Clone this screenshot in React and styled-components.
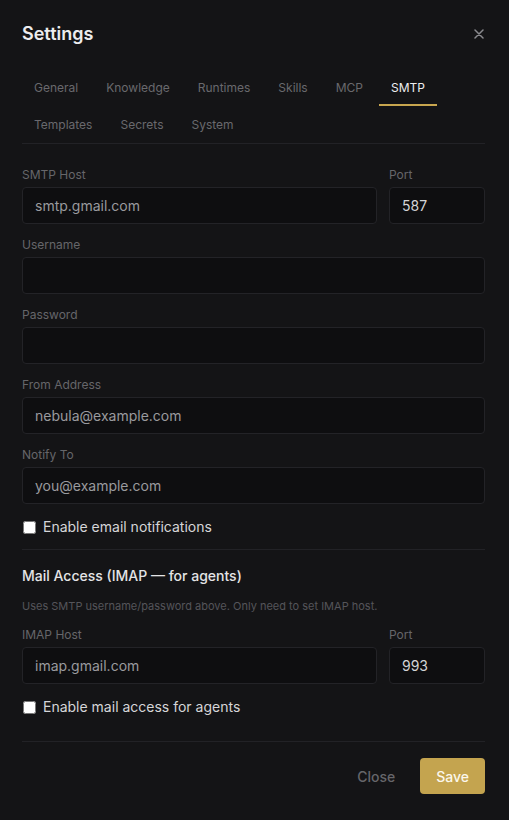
import React from "react";
import styled, { createGlobalStyle } from "styled-components";

const GlobalStyle = createGlobalStyle`
  html, body {
    margin: 0;
    padding: 0;
    background: #141416;
  }
  body {
    font-family: Inter, "Noto Sans", sans-serif;
    -webkit-font-smoothing: antialiased;
  }
  * { box-sizing: border-box; }
`;

const Modal = styled.div`
  width: 509px;
  min-height: 820px;
  padding: 22px 24px 26px 22px;
  background: #141416;
  display: flex;
  flex-direction: column;
`;

const Header = styled.div`
  display: flex;
  justify-content: space-between;
  align-items: center;
  height: 24px;
  margin-bottom: 23px;
`;

const Title = styled.h2`
  margin: 0;
  font-size: 18px;
  font-weight: 600;
  line-height: 24px;
  color: #ececee;
`;

const CloseIcon = styled.button`
  background: none;
  border: none;
  padding: 0;
  margin-right: 1px;
  display: flex;
  cursor: pointer;
`;

const Tabs = styled.div`
  display: flex;
  flex-wrap: wrap;
  column-gap: 4px;
  border-bottom: 1px solid #222226;
`;

const Tab = styled.button`
  background: none;
  border: none;
  border-bottom: 2px solid ${(p) => (p.$active ? "#c8a64f" : "transparent")};
  padding: 11px 12px 8px;
  font-family: inherit;
  font-size: 12px;
  line-height: 16px;
  color: ${(p) => (p.$active ? "#ededef" : "#69696d")};
  cursor: pointer;
`;

const Form = styled.div`
  display: flex;
  flex-direction: column;
  margin-top: 23px;
`;

const Row = styled.div`
  display: flex;
  gap: 12px;
  margin-top: ${(p) => p.$mt || 0}px;
`;

const Field = styled.div`
  display: flex;
  flex-direction: column;
  flex: ${(p) => (p.$width ? `0 0 ${p.$width}px` : "1")};
  min-width: 0;
`;

const Label = styled.label`
  font-size: 12px;
  line-height: 16px;
  color: #66666a;
  margin-bottom: 4px;
`;

const Input = styled.input`
  height: 37px;
  width: 100%;
  background: #0e0e10;
  border: 1px solid #232327;
  border-radius: 4px;
  padding: 0 12px;
  font-family: inherit;
  font-size: 14px;
  color: #d4d4d6;
  outline: none;
  &::placeholder {
    color: #9a9a9e;
  }
`;

const CheckRow = styled.label`
  display: flex;
  align-items: center;
  gap: 7px;
  margin-top: 13px;
  font-size: 14px;
  line-height: 20px;
  color: #d6d6d8;
  cursor: pointer;
  input {
    margin: 0 0 0 1px;
    width: 13px;
    height: 13px;
  }
`;

const Divider = styled.hr`
  border: none;
  border-top: 1px solid #222226;
  margin: 12px 0 0;
  width: 100%;
`;

const SectionTitle = styled.h3`
  margin: 16px 0 0;
  font-size: 14px;
  font-weight: 500;
  line-height: 20px;
  color: #e4e4e6;
`;

const Hint = styled.p`
  margin: 13px 0 0;
  font-size: 11px;
  line-height: 14px;
  color: #55555a;
`;

const Footer = styled.div`
  display: flex;
  justify-content: flex-end;
  gap: 9px;
  border-top: 1px solid #222226;
  margin-top: 24px;
  padding-top: 16px;
`;

const Button = styled.button`
  height: 36px;
  padding: 0 16px;
  border: none;
  border-radius: 4px;
  font-family: inherit;
  font-size: 14px;
  font-weight: 500;
  cursor: pointer;
  background: ${(p) => (p.$primary ? "#c4a44f" : "transparent")};
  color: ${(p) => (p.$primary ? "#fbf7ec" : "#66666a")};
`;

const tabs = ["General", "Knowledge", "Runtimes", "Skills", "MCP", "SMTP", "Templates", "Secrets", "System"];

const App = () => {
  return (
    <>
      <GlobalStyle />
      <Modal>
        <Header>
          <Title>Settings</Title>
          <CloseIcon aria-label="Close">
            <svg width="10" height="10" viewBox="0 0 10 10">
              <path d="M1 1L9 9M9 1L1 9" stroke="#8a8a8e" strokeWidth="1.5" strokeLinecap="round" />
            </svg>
          </CloseIcon>
        </Header>
        <Tabs>
          {tabs.map((t) => (
            <Tab key={t} $active={t === "SMTP"}>
              {t}
            </Tab>
          ))}
        </Tabs>
        <Form>
          <Row>
            <Field>
              <Label>SMTP Host</Label>
              <Input placeholder="smtp.gmail.com" />
            </Field>
            <Field $width={96}>
              <Label>Port</Label>
              <Input defaultValue="587" />
            </Field>
          </Row>
          <Row $mt={13}>
            <Field>
              <Label>Username</Label>
              <Input />
            </Field>
          </Row>
          <Row $mt={13}>
            <Field>
              <Label>Password</Label>
              <Input type="password" />
            </Field>
          </Row>
          <Row $mt={13}>
            <Field>
              <Label>From Address</Label>
              <Input placeholder="nebula@example.com" />
            </Field>
          </Row>
          <Row $mt={13}>
            <Field>
              <Label>Notify To</Label>
              <Input placeholder="you@example.com" />
            </Field>
          </Row>
          <CheckRow>
            <input type="checkbox" />
            Enable email notifications
          </CheckRow>
          <Divider />
          <SectionTitle>Mail Access (IMAP — for agents)</SectionTitle>
          <Hint>Uses SMTP username/password above. Only need to set IMAP host.</Hint>
          <Row $mt={14}>
            <Field>
              <Label>IMAP Host</Label>
              <Input placeholder="imap.gmail.com" />
            </Field>
            <Field $width={96}>
              <Label>Port</Label>
              <Input defaultValue="993" />
            </Field>
          </Row>
          <CheckRow>
            <input type="checkbox" />
            Enable mail access for agents
          </CheckRow>
        </Form>
        <Footer>
          <Button>Close</Button>
          <Button $primary>Save</Button>
        </Footer>
      </Modal>
    </>
  );
};

export default App;
